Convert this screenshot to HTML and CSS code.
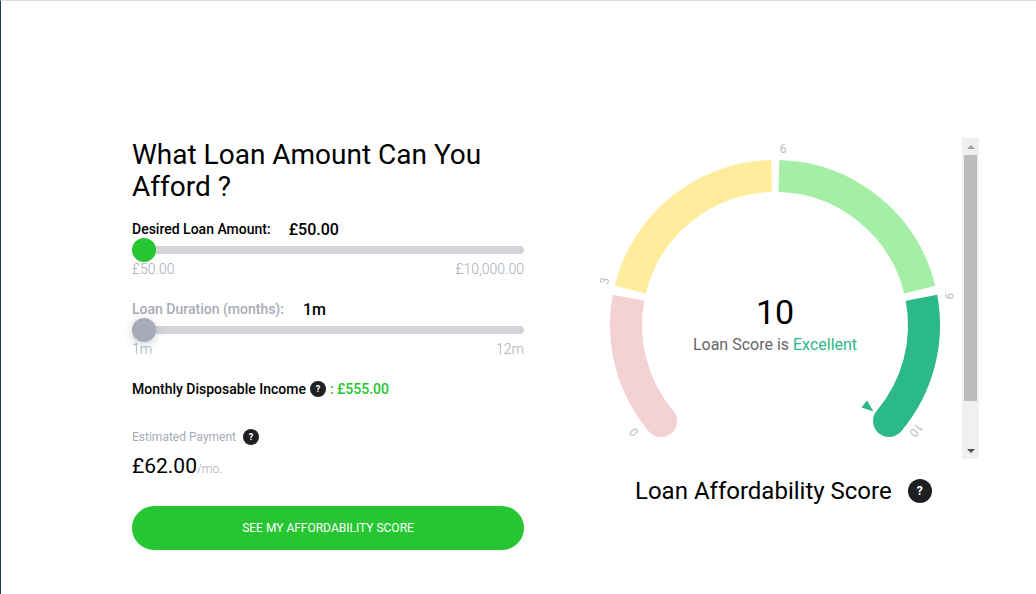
FILE: index.html
```html
<!DOCTYPE html>
<html lang="en">
<head>
    <meta charset="UTF-8">
    <title>Loan Affordability</title>
    <link rel="stylesheet" href="styles.css">
</head>
<body>
    <div class="container">
        <div class="form-col">
            <h1>What Loan Amount Can You Afford ?</h1>
            <div class="slider-block">
                <div class="slider-label">
                    <span class="label-text">Desired Loan Amount:</span>
                    <span class="label-value">£50.00</span>
                </div>
                <div class="track"><div class="thumb"></div></div>
                <div class="range-ends"><span>£50.00</span><span>£10,000.00</span></div>
            </div>
            <div class="slider-block duration">
                <div class="slider-label">
                    <span class="label-text">Loan Duration (months):</span>
                    <span class="label-value">1m</span>
                </div>
                <div class="track"><div class="thumb"></div></div>
                <div class="range-ends"><span>1m</span><span>12m</span></div>
            </div>
            <div class="income">
                <span>Monthly Disposable Income</span>
                <span class="help help-sm">?</span>
                <span class="income-value">: £555.00</span>
            </div>
            <div class="estimate-label">
                <span>Estimated Payment</span>
                <span class="help help-sm">?</span>
            </div>
            <div class="estimate"><span class="estimate-value">£62.00</span><span class="per-month">/mo.</span></div>
            <button class="cta">SEE MY AFFORDABILITY SCORE</button>
        </div>
        <div class="gauge-col">
            <div class="gauge-frame">
                <div class="gauge">
                    <svg class="gauge-svg" width="362" height="321" viewBox="600 138 362 321">
                        <path class="seg" stroke="#f4d1d2" d="M661 421 A149 149 0 0 1 628.5 297.7"/>
                        <circle cx="661" cy="421" r="16" fill="#f4d1d2"/>
                        <path class="seg" stroke="#ffec9c" d="M630.3 289.6 A149 149 0 0 1 771.6 176"/>
                        <path class="seg" stroke="#a4eea6" d="M778.9 176 A149 149 0 0 1 919.7 289.6"/>
                        <path class="seg" stroke="#2bb88a" d="M921.5 297.7 A149 149 0 0 1 889 421"/>
                        <circle cx="889" cy="421" r="16" fill="#2bb88a"/>
                        <polygon points="867,400.5 861.5,407.5 873.5,411.5" fill="#2bb88a"/>
                        <text class="tick" transform="translate(783 149)">6</text>
                        <text class="tick" transform="translate(604.5 281) rotate(-77)">3</text>
                        <text class="tick" transform="translate(949 296) rotate(103)">9</text>
                        <text class="tick" transform="translate(634 432) rotate(-130)">0</text>
                        <text class="tick" transform="translate(916 430) rotate(130)">10</text>
                    </svg>
                    <div class="score">
                        <div class="score-value">10</div>
                        <div class="score-text">Loan Score is <span class="score-word">Excellent</span></div>
                    </div>
                </div>
                <div class="scrollbar">
                    <div class="arrow arrow-up"></div>
                    <div class="scroll-track"><div class="scroll-thumb"></div></div>
                    <div class="arrow arrow-down"></div>
                </div>
            </div>
            <div class="gauge-title">
                <span>Loan Affordability Score</span>
                <span class="help help-lg">?</span>
            </div>
        </div>
    </div>
</body>
</html>
```

FILE: styles.css
```css
* {
    box-sizing: border-box;
}
html, body {
    height: 100%;
}
body {
    font-family: 'Roboto', Arial, sans-serif;
    background: #fff;
    color: #000;
    margin: 0;
    border-top: 1px solid #dcdcdc;
    border-left: 1px solid #1f3a5a;
    overflow: hidden;
}
.container {
    display: flex;
    padding: 138px 0 0 131px;
}
.form-col {
    width: 392px;
    margin-right: 76px;
}
h1 {
    font-size: 28px;
    line-height: 32px;
    font-weight: 400;
    margin: 0 0 16px 0;
}
.slider-block {
    margin-bottom: 22px;
}
.slider-label {
    display: flex;
    align-items: center;
    height: 20px;
    margin-bottom: 7px;
}
.label-text {
    font-size: 14px;
    font-weight: 500;
    margin-right: 18px;
}
.label-value {
    font-size: 16px;
    font-weight: 500;
}
.duration .label-text {
    color: #a8abb7;
    margin-right: 19px;
}
.track {
    position: relative;
    height: 8px;
    background: #d3d4da;
    border-radius: 4px;
}
.thumb {
    position: absolute;
    left: 0;
    top: -8px;
    width: 24px;
    height: 24px;
    border-radius: 50%;
    background: #26c632;
}
.duration .thumb {
    background: #a8abb7;
    box-shadow: 0 2px 8px rgba(60,72,100,0.25);
}
.range-ends {
    display: flex;
    justify-content: space-between;
    font-size: 14px;
    font-weight: 300;
    line-height: 16px;
    color: #a8abb7;
    margin-top: 7px;
}
.income {
    display: flex;
    align-items: center;
    gap: 3px;
    font-size: 14px;
    font-weight: 500;
    margin-top: 24px;
}
.income .help {
    margin-left: 1px;
}
.income-value {
    color: #26c632;
    margin-left: 1px;
}
.help {
    display: inline-flex;
    align-items: center;
    justify-content: center;
    border-radius: 50%;
    background: #1f2024;
    color: #fff;
    font-weight: 700;
}
.help-sm {
    width: 16px;
    height: 16px;
    font-size: 9px;
}
.help-lg {
    width: 24px;
    height: 24px;
    font-size: 12px;
    margin-left: 16px;
}
.estimate-label {
    display: flex;
    align-items: center;
    gap: 7px;
    font-size: 12px;
    font-weight: 400;
    color: #a8abb7;
    margin-top: 32px;
}
.estimate {
    margin-top: 7px;
    line-height: 28px;
}
.estimate-value {
    font-size: 21px;
}
.per-month {
    font-size: 12px;
    font-weight: 300;
    color: #a8abb7;
}
.cta {
    display: block;
    width: 100%;
    height: 44px;
    margin-top: 23px;
    border: none;
    border-radius: 22px;
    background: #26c632;
    color: #fff;
    font-family: inherit;
    font-size: 12px;
    font-weight: 400;
}
.gauge-col {
    margin-top: -1px;
}
.gauge-frame {
    display: flex;
}
.gauge {
    position: relative;
    width: 362px;
    height: 321px;
}
.gauge-svg {
    display: block;
    overflow: visible;
}
.seg {
    fill: none;
    stroke-width: 32;
}
.tick {
    font-size: 12px;
    font-weight: 400;
    fill: #b9bbc6;
    text-anchor: middle;
    dominant-baseline: central;
}
.score {
    position: absolute;
    left: 0;
    right: 0;
    top: 154px;
    padding-right: 12px;
    text-align: center;
}
.score-value {
    font-size: 34px;
    line-height: 40px;
}
.score-text {
    font-size: 16px;
    font-weight: 400;
    color: #666;
    line-height: 24px;
    margin-top: 1px;
}
.score-word {
    color: #2bb88a;
}
.scrollbar {
    width: 17px;
    height: 321px;
    background: #f0f0f0;
    display: flex;
    flex-direction: column;
}
.arrow {
    height: 17px;
    display: flex;
    align-items: center;
    justify-content: center;
}
.arrow::before {
    content: "";
    border-left: 4px solid transparent;
    border-right: 4px solid transparent;
}
.arrow-up::before {
    border-bottom: 4px solid #a3a3a3;
}
.arrow-down::before {
    border-top: 4px solid #505050;
}
.scroll-track {
    flex: 1;
    padding: 0 2px;
}
.scroll-thumb {
    height: 246px;
    background: #bdbdbd;
}
.gauge-title {
    display: flex;
    align-items: center;
    font-size: 24px;
    margin-top: 18px;
    padding-left: 35px;
}
```
